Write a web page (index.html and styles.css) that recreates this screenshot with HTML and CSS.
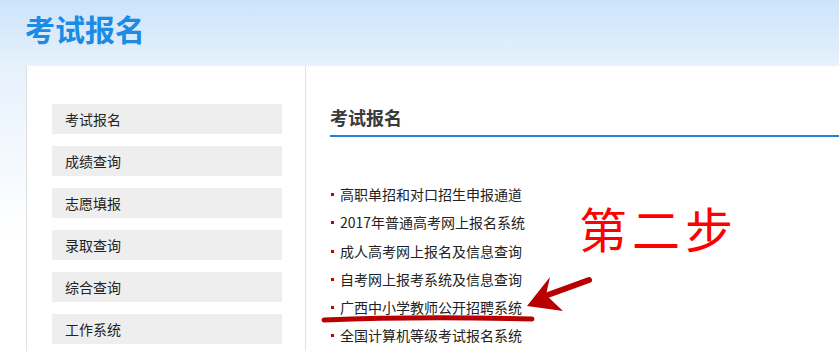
FILE: index.html
```html
<!DOCTYPE html>
<html lang="zh-CN">
  <head>
    <meta charset="UTF-8" />
    <meta name="viewport" content="width=device-width, initial-scale=1.0" />
    <title>考试报名</title>
    <link rel="stylesheet" href="styles.css">
  </head>
  <body>
    <div class="header">
      <h1>考试报名</h1>
    </div>
    <div class="panel">
      <ul class="sidebar">
        <li>考试报名</li>
        <li>成绩查询</li>
        <li>志愿填报</li>
        <li>录取查询</li>
        <li>综合查询</li>
        <li>工作系统</li>
      </ul>
      <div class="content">
        <h2>考试报名</h2>
        <ul class="links">
          <li>高职单招和对口招生申报通道</li>
          <li>2017年普通高考网上报名系统</li>
          <li>成人高考网上报名及信息查询</li>
          <li>自考网上报考系统及信息查询</li>
          <li>广西中小学教师公开招聘系统</li>
          <li>全国计算机等级考试报名系统</li>
        </ul>
      </div>
    </div>

    <!-- annotation drawn over the screenshot -->
    <div class="step">第二步</div>
    <svg class="marks" width="839" height="351" viewBox="0 0 839 351">
      <path d="M324 320 Q420 316 532 319" stroke="#b80000" stroke-width="5" fill="none" stroke-linecap="round" />
      <path d="M589 280 L545 296" stroke="#b80000" stroke-width="6" fill="none" stroke-linecap="round" />
      <polygon points="527,306 550,277 546,295 563,311" fill="#b80000" />
    </svg>
  </body>
</html>
```

FILE: styles.css
```css
* {
  box-sizing: border-box;
  margin: 0;
  padding: 0;
}

body {
  font-family: "Noto Sans CJK SC", "Liberation Sans", sans-serif;
  background-image: linear-gradient(
    180deg,
    #cce4fa 0px,
    #e6f1fc 65px,
    #f4f9fe 160px,
    #ffffff 240px
  );
  color: #333;
  width: 839px;
  height: 351px;
  overflow: hidden;
  position: relative;
}

.header {
  height: 65px;
  padding: 8px 0 0 25px;
}

.header h1 {
  font-size: 30px;
  font-weight: bold;
  color: #1c8be6;
  line-height: 40px;
}

.panel {
  display: flex;
  margin-left: 26px;
  height: 286px;
  background-color: #fff;
  border-top: 1px dotted #d6e6f3;
  border-left: 1px solid #e2e2e2;
}

.sidebar {
  list-style: none;
  width: 279px;
  padding: 38px 0 0 25px;
  border-right: 1px solid #e2e2e2;
}

.sidebar li {
  width: 230px;
  height: 30px;
  line-height: 30px;
  margin-bottom: 12px;
  padding-left: 13px;
  font-size: 14px;
  color: #222;
  background-color: #eeeeee;
}

.content {
  flex: 1;
  padding: 36px 0 0 24px;
}

.content h2 {
  font-size: 18px;
  font-weight: bold;
  color: #3a3a3a;
  line-height: 30px;
  padding-bottom: 3px;
  border-bottom: 2px solid #1e82dc;
}

.links {
  list-style: none;
  margin-top: 43px;
}

.links li {
  position: relative;
  font-size: 14px;
  line-height: 28.3px;
  padding-left: 10px;
  color: #222;
}

.links li::before {
  content: "";
  position: absolute;
  left: 1px;
  top: 13px;
  width: 3px;
  height: 3px;
  background-color: #c40000;
}

.step {
  position: absolute;
  left: 579px;
  top: 203px;
  font-size: 48px;
  line-height: 1;
  color: #ff0000;
  letter-spacing: 5px;
}

.marks {
  position: absolute;
  left: 0;
  top: 0;
}
```
